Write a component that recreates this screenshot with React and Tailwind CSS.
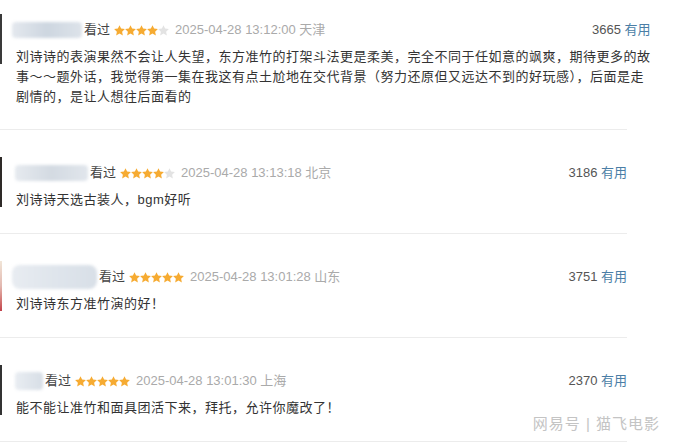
import React from "react";

const reviews = [
  {
    nameClass: "w-[70px] h-[16px] -ml-[4px] rounded-sm bg-gradient-to-r from-[#e4e8ee] via-[#cdd6e0] to-[#dde3ea]",
    avatarClass: "bg-[#3a3a3a]",
    blockClass: "pt-[20px] pb-[22px]",
    rating: 4,
    date: "2025-04-28 13:12:00 天津",
    votes: 3665,
    lines: [
      "刘诗诗的表演果然不会让人失望，东方准竹的打架斗法更是柔美，完全不同于任如意的飒爽，期待更多的故",
      "事～～题外话，我觉得第一集在我这有点土尬地在交代背景（努力还原但又远达不到的好玩感），后面是走",
      "剧情的，是让人想往后面看的",
    ],
  },
  {
    nameClass: "w-[73px] h-[16px] -ml-[1px] rounded-sm bg-gradient-to-r from-[#e6eaef] via-[#d3dae2] to-[#e1e6ec]",
    avatarClass: "bg-[#2e2a28]",
    blockClass: "pt-[33px] pb-[23px]",
    rating: 4,
    date: "2025-04-28 13:13:18 北京",
    votes: 3186,
    lines: ["刘诗诗天选古装人，bgm好听"],
  },
  {
    nameClass: "w-[85px] h-[24px] -ml-[4px] rounded-lg bg-gradient-to-r from-[#e8ecf1] via-[#dfe5ec] to-[#d8dfe7]",
    avatarClass: "bg-gradient-to-b from-[#f1e6d8] via-[#e2b8b0] to-[#c0404a]",
    blockClass: "pt-[33px] pb-[23px]",
    rating: 5,
    date: "2025-04-28 13:01:28 山东",
    votes: 3751,
    lines: ["刘诗诗东方准竹演的好！"],
  },
  {
    nameClass: "w-[28px] h-[18px] -ml-[1px] rounded-sm bg-gradient-to-r from-[#e9edf2] to-[#d7dee6]",
    avatarClass: "bg-[#333]",
    blockClass: "pt-[33px] pb-[23px]",
    rating: 5,
    date: "2025-04-28 13:01:30 上海",
    votes: 2370,
    lines: ["能不能让准竹和面具团活下来，拜托，允许你魔改了！"],
  },
];

function Star({ filled }) {
  return (
    <svg width="11" height="11" viewBox="1.5 1.5 21 21" className="shrink-0">
      <path
        d="M12 1.8l3.1 6.6 7.2.9-5.3 5 1.4 7.1L12 17.9l-6.4 3.5 1.4-7.1-5.3-5 7.2-.9z"
        fill={filled ? "#f6ab32" : "#e3e3e3"}
      />
    </svg>
  );
}

function Review({ review }) {
  return (
    <div className={`flex border-b border-[#ececec] ${review.blockClass}`}>
      <div className={`w-[2px] h-[50px] -mt-[6px] shrink-0 ${review.avatarClass}`} />
      <div className="flex-1 pl-[14px]">
        <div className="flex items-center h-[20px] text-[13px]">
          <div className={`blur-[1.5px] shrink-0 ${review.nameClass}`} />
          <span className="ml-[2px] text-[#444]">看过</span>
          <span className="ml-[4px] flex">
            {[0, 1, 2, 3, 4].map((i) => (
              <Star key={i} filled={i < review.rating} />
            ))}
          </span>
          <span className="ml-[6px] text-[#aaa]">{review.date}</span>
          <span className="ml-auto text-[#555]">
            {review.votes} <span className="text-[#4b7ea6]">有用</span>
          </span>
        </div>
        <div className="mt-[7px] text-[13px] leading-[20px] tracking-[0.5px] text-[#333] whitespace-nowrap">
          {review.lines.map((line, i) => (
            <div key={i}>{line}</div>
          ))}
        </div>
      </div>
    </div>
  );
}

export default function App() {
  return (
    <div
      className="relative w-[674px] h-[445px] overflow-hidden bg-white"
      style={{ fontFamily: '"Liberation Sans", "Noto Sans CJK SC", sans-serif' }}
    >
      <div className="w-[627px]">
        {reviews.map((r, i) => (
          <Review key={i} review={r} />
        ))}
      </div>

      {/* watermark */}
      <div className="absolute right-[14px] bottom-[10px] text-[15px] tracking-[1px] text-[#c4c4c4] [text-shadow:0_0_2px_#fff,0_0_1px_#fff]">
        网易号 | 猫飞电影
      </div>
    </div>
  );
}
